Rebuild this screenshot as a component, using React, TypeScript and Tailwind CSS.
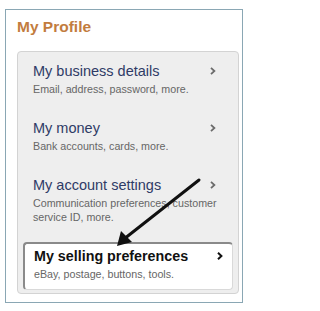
import React from "react";

const Chevron = ({ dark }: { dark?: boolean }) => (
  <svg width="6" height="8" viewBox="0 0 6 8" className="shrink-0">
    <polyline
      points="1,0.8 4.4,4 1,7.2"
      fill="none"
      stroke={dark ? "#111" : "#6b6b6b"}
      strokeWidth={dark ? 2 : 1.8}
    />
  </svg>
);

type Item = { title: string; sub: string[] };

const items: Item[] = [
  { title: "My business details", sub: ["Email, address, password, more."] },
  { title: "My money", sub: ["Bank accounts, cards, more."] },
  { title: "My account settings", sub: ["Communication preferences, customer", "service ID, more."] },
];

export default function App() {
  return (
    <div className="w-[247px] h-[311px] bg-white relative" style={{ fontFamily: '"Liberation Sans", Arial, sans-serif' }}>
      <div className="absolute left-[5px] top-[9px] w-[238px] h-[294px] border border-[#8aa7b4] pl-[11px] pr-[4px] pt-[7px]">
        <div className="text-[15.5px] leading-[20px] font-bold text-[#c27c3e]">My Profile</div>
        <div className="mt-[14px] w-[222px] h-[243px] bg-[#eeeeee] border border-[#d3d3d3] rounded-[4px] px-[5px] pt-[10px]">
          {items.map((it, i) => (
            <div key={i} className={"px-[10px] " + (i > 0 ? "mt-[23px]" : "")}>
              <div className="flex items-center justify-between pr-[7px]">
                <span className="text-[14.5px] leading-[18px] text-[#2f3b66]">{it.title}</span>
                <Chevron />
              </div>
              <div className="mt-[2px] text-[10.7px] leading-[14px] text-[#666666]">
                {it.sub.map((s, j) => (
                  <div key={j}>{s}</div>
                ))}
              </div>
            </div>
          ))}
          <div className="mt-[18px] bg-white rounded-[4px] border border-[#d9d9d9] border-t-[#8a8a8a] border-l-[#8a8a8a] border-t-2 border-l-2 pl-[9px] pt-[3px] pb-[7px] h-[48px]">
            <div className="flex items-center justify-between pr-[9px]">
              <span className="text-[14.3px] leading-[18px] font-bold text-[#111111]">My selling preferences</span>
              <Chevron dark />
            </div>
            <div className="mt-[2px] text-[10.7px] leading-[14px] text-[#666666]">eBay, postage, buttons, tools.</div>
          </div>
        </div>
      </div>
      <svg className="absolute left-0 top-0 pointer-events-none" width="247" height="311" viewBox="0 0 247 311">
        <line x1="199" y1="180" x2="124" y2="239" stroke="#111" strokeWidth="3" strokeLinecap="round" />
        <polygon points="117,246 121,231 132,242" fill="#111" />
      </svg>
    </div>
  );
}
